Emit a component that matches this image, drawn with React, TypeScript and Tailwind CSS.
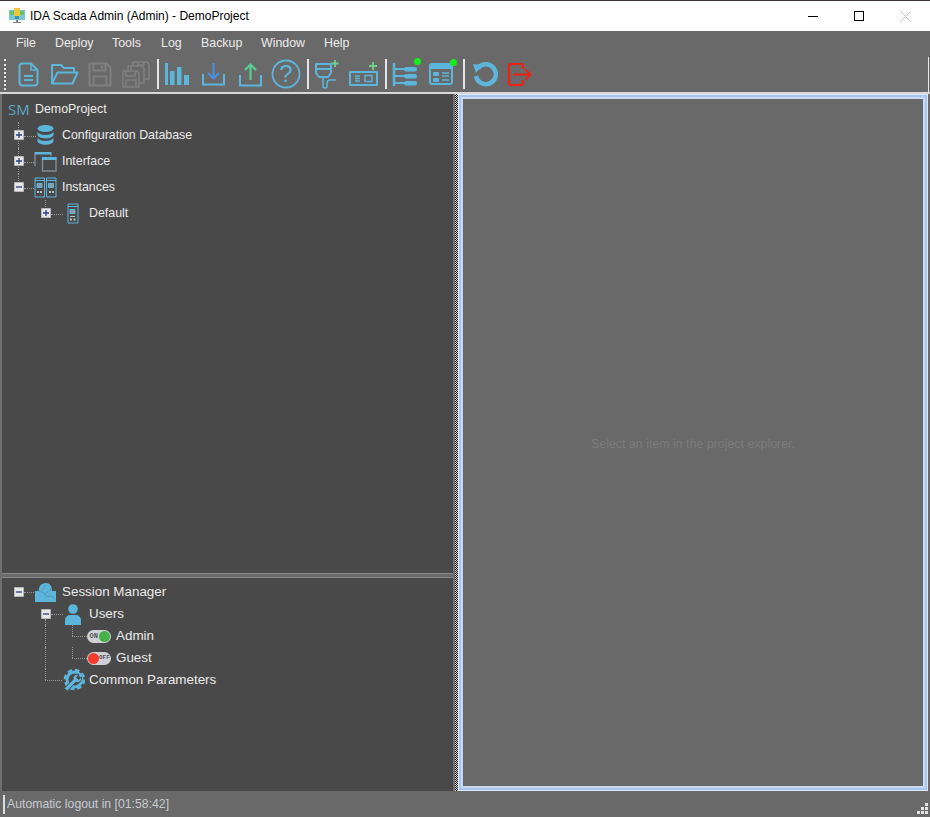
import React from 'react';

const BLUE = '#5cb5da';
const GREY = '#808080';

const menus = [
  { label: 'File', width: 'w-[39px]' },
  { label: 'Deploy', width: 'w-[57px]' },
  { label: 'Tools', width: 'w-[49px]' },
  { label: 'Log', width: 'w-[40px]' },
  { label: 'Backup', width: 'w-[60px]' },
  { label: 'Window', width: 'w-[63px]' },
  { label: 'Help', width: 'w-[40px]' },
];

function Icon({ w = 26, h = 26, children }: { w?: number; h?: number; children: React.ReactNode }) {
  return (
    <svg width={w} height={h} viewBox={`0 0 ${w} ${h}`} fill="none" className="block shrink-0">
      {children}
    </svg>
  );
}

const toolbarIcons = {
  file: (
    <Icon w={21} h={25}>
      <path d="M1.5 4a2.5 2.5 0 0 1 2.5-2.5h9l6.5 6.5v13a2.5 2.5 0 0 1-2.5 2.5H4A2.5 2.5 0 0 1 1.5 21z" stroke={BLUE} strokeWidth="2" />
      <path d="M13 2v6h6.5" stroke={BLUE} strokeWidth="1.6" />
      <path d="M6 14h9M6 18h9" stroke={BLUE} strokeWidth="1.8" />
    </Icon>
  ),
  open: (
    <Icon w={29} h={22}>
      <path d="M2 20V2h9l3 3h10v4" stroke={BLUE} strokeWidth="2" strokeLinejoin="round" />
      <path d="M2 20.5L7.5 9.5h20l-5 11z" stroke={BLUE} strokeWidth="2" strokeLinejoin="round" />
    </Icon>
  ),
  save: (
    <Icon w={24} h={25}>
      <g stroke={GREY} strokeWidth="2">
        <path d="M1.5 1.5h17l4 4v18h-21z" />
        <path d="M5.5 1.5v7h12v-7M5.5 23.5v-9h13v9" />
        <path d="M14 4v2.5" />
      </g>
    </Icon>
  ),
  saveAll: (
    <Icon w={28} h={27}>
      <g stroke={GREY} strokeWidth="1.5">
        <path d="M11 1h14l2 2v15H11z" />
        <path d="M6 5h14l2 2v15H6z" fill="#696969" />
        <path d="M1 10h14l2 2v14H1z" fill="#696969" />
        <path d="M4 10v5h9v-5M4 26v-7h10v7M9 5v4M16 1v3h6V1" />
      </g>
    </Icon>
  ),
  chart: (
    <Icon w={26} h={24}>
      <g fill={BLUE}>
        <rect x="1" y="1" width="3" height="22" />
        <rect x="6" y="9" width="4.5" height="14" />
        <rect x="13" y="5" width="4.5" height="18" />
        <rect x="20" y="13" width="5" height="10" />
      </g>
    </Icon>
  ),
  download: (
    <Icon w={23} h={24}>
      <path d="M1 12v10.500h21V12" stroke={BLUE} strokeWidth="2" />
      <path d="M11.5 1v15M6 11l5.5 5.5L17 11" stroke="#4a90d9" strokeWidth="2.2" />
    </Icon>
  ),
  upload: (
    <Icon w={23} h={25}>
      <path d="M1 13v10.500h21V13" stroke={BLUE} strokeWidth="2" />
      <path d="M11.5 18V3M6 8l5.500-5.500L17 8" stroke="#55cf94" strokeWidth="2.2" />
    </Icon>
  ),
  help: (
    <Icon w={30} h={30}>
      <circle cx="15" cy="15" r="13.5" stroke={BLUE} strokeWidth="1.8" />
      <text x="15" y="23" textAnchor="middle" fontSize="24" fontFamily="Liberation Sans" fill={BLUE}>?</text>
    </Icon>
  ),
  port: (
    <Icon w={27} h={31}>
      <path d="M2 5h15v9l-3 4H5l-3-4z" stroke={BLUE} strokeWidth="2" strokeLinejoin="round" />
      <path d="M2 10h15" stroke={BLUE} strokeWidth="2" />
      <path d="M9 18v9a2 2 0 0 0 4 0v-3a3 3 0 0 1 3-3h6" stroke={BLUE} strokeWidth="1.6" />
      <path d="M21 1v7M17.5 4.5h7" stroke="#6fd08c" strokeWidth="1.8" />
    </Icon>
  ),
  device: (
    <Icon w={29} h={24}>
      <path d="M1 10h27v13H1z" stroke={BLUE} strokeWidth="2" strokeLinejoin="round" />
      <path d="M6 14h5M6 16.500h5M6 19h5" stroke={BLUE} strokeWidth="1.3" />
      <path d="M16 13.500h7v6h-7z" stroke={BLUE} strokeWidth="1.4" />
      <path d="M24 0v8M20 4h8" stroke="#6fd08c" strokeWidth="1.8" />
    </Icon>
  ),
  tree: (
    <Icon w={25} h={25}>
      <path d="M2 1v23" stroke={BLUE} strokeWidth="2.5" />
      <path d="M2 7h12M2 14h12M2 21h12" stroke={BLUE} strokeWidth="2" />
      <rect x="12" y="5" width="13" height="4.5" rx="2" fill={BLUE} />
      <rect x="12" y="12" width="13" height="4.5" rx="2" fill={BLUE} />
      <rect x="12" y="19" width="13" height="4.5" rx="2" fill={BLUE} />
    </Icon>
  ),
  form: (
    <Icon w={24} h={22}>
      <rect x="1" y="1" width="22" height="20" rx="2" stroke={BLUE} strokeWidth="2" />
      <rect x="1" y="1" width="22" height="5" fill={BLUE} />
      <rect x="4" y="9" width="6" height="4" rx="1" fill={BLUE} />
      <rect x="4" y="15" width="6" height="4" rx="1" fill={BLUE} />
      <path d="M13 10h7M13 13h7M13 17h7" stroke={BLUE} strokeWidth="1.6" />
    </Icon>
  ),
  refresh: (
    <Icon w={26} h={26}>
      <path d="M6 7a10 10 0 1 1-2 8" stroke={BLUE} strokeWidth="4.5" />
      <path d="M1 3l10 1-7 8z" fill={BLUE} />
    </Icon>
  ),
  exit: (
    <Icon w={25} h={25}>
      <path d="M16 7V4a2 2 0 0 0-2-2H4a2 2 0 0 0-2 2v17a2 2 0 0 0 2 2h10a2 2 0 0 0 2-2v-3" stroke="#f02014" strokeWidth="2.2" />
      <path d="M6 12.500h17M18.500 7.500l5 5-5 5" stroke="#f02014" strokeWidth="1.8" />
    </Icon>
  ),
};

function GreenDot({ children }: { children: React.ReactNode }) {
  return (
    <div className="relative">
      {children}
      <span className="absolute -top-[4px] -right-[4px] h-[7px] w-[7px] rounded-full bg-[#13ee1c]" />
    </div>
  );
}

function Separator({ className }: { className: string }) {
  return <div className={`h-[30px] w-[2px] shrink-0 bg-[#e4e4e4] ${className}`} />;
}

function ToolButton({ children, width }: { children: React.ReactNode; width: string }) {
  return <div className={`flex shrink-0 items-center justify-center ${width}`}>{children}</div>;
}

function Expander({ open }: { open?: boolean }) {
  return (
    <svg width="10" height="10" viewBox="0 0 10 10" className="block">
      <rect x="0" y="0" width="10" height="10" fill="#e6e6e6" stroke="#8c8c8c" />
      <path d={open ? 'M2 5h6' : 'M2 5h6M5 2v6'} stroke="#2b3f86" strokeWidth="1.3" />
    </svg>
  );
}

const treeIcons = {
  database: (
    <Icon w={17} h={20}>
      <ellipse cx="8.5" cy="3.5" rx="8" ry="3.5" fill={BLUE} />
      <path d="M0.5 6.500c1 4.500 15 4.500 16 0v3.500c-1 4.500-15 4.500-16 0z" fill={BLUE} />
      <path d="M0.5 12.500c1 4.500 15 4.500 16 0v3.500c-1 5-15 5-16 0z" fill={BLUE} />
    </Icon>
  ),
  interface: (
    <Icon w={23} h={21}>
      <path d="M1 15V2h16v3" stroke="#7d8a94" strokeWidth="1.5" />
      <path d="M1 1h16v2.500H1z" fill={BLUE} />
      <path d="M8.5 7h13.500v13H8.500z" stroke="#7d8a94" strokeWidth="1.5" />
      <path d="M8 6h14.500v3H8z" fill={BLUE} />
    </Icon>
  ),
  instances: (
    <Icon w={23} h={21}>
      <g stroke={BLUE} strokeWidth="1">
        <path d="M1 1h9.500v19H1zM12.500 1H22v19h-9.500zM1 3.500h9.500M12.500 3.500H22" />
        <path d="M3 6.500h5v4H3zM14.500 6.500h5v4h-5z" fill="#8c9aa2" />
      </g>
      <path d="M3 14h2v2H3zM6 14h2v2H6zM15 14h2v2h-2zM18 14h2v2h-2z" fill="#b8c4c9" />
    </Icon>
  ),
  instance: (
    <Icon w={12} h={21}>
      <g stroke={BLUE} strokeWidth="1">
        <path d="M1 1h10v19H1zM1 3.500h10" />
        <path d="M3 6.500h5v4H3z" fill="#8c9aa2" />
      </g>
      <path d="M3 13h5v1H3zM3 15.500h2v2H3zM6.500 15.500h2v2h-2z" fill="#b8c4c9" />
    </Icon>
  ),
  session: (
    <Icon w={23} h={21}>
      <path d="M1 9h21v11H1z" fill={BLUE} />
      <path d="M5 10a7 7 0 0 1 7-9c4 0 6 3 6 9z" fill={BLUE} />
      <path d="M3 8l7 3 3 4 4-1 4 3M12 3L7 9M17 7l-7 6" stroke="#3f6f86" strokeWidth="0.8" strokeDasharray="1 1" />
    </Icon>
  ),
  user: (
    <Icon w={18} h={21}>
      <circle cx="9" cy="5" r="4.8" fill={BLUE} />
      <path d="M1 21v-5c0-3 3-5 5-5h6c2 0 5 2 5 5v5z" fill={BLUE} />
    </Icon>
  ),
  wrench: (
    <Icon w={23} h={23}>
      <circle cx="12.5" cy="10.500" r="7.5" stroke={BLUE} strokeWidth="3" />
      <circle cx="12.5" cy="10.500" r="9.5" stroke={BLUE} strokeWidth="2.5" strokeDasharray="4.5 3" />
      <path d="M2 19.500l9-9a4.500 4.500 0 0 1 6-5l-2.500 3 2 2 3-2.500a4.500 4.500 0 0 1-6 5.500l-8 8.500z" fill={BLUE} stroke="#494949" strokeWidth="1" />
    </Icon>
  ),
};

function Toggle({ on }: { on?: boolean }) {
  return (
    <span
      className={`flex h-[13px] w-[24px] items-center rounded-full bg-[#ced2d6] px-[1px] ${on ? 'justify-end' : 'justify-start'}`}
    >
      {on ? (
        <>
          <span className="mr-[1px] font-['Liberation_Mono',monospace] text-[7px] font-bold leading-none text-[#555555]">ON</span>
          <span className="h-[11px] w-[11px] rounded-full bg-[#46b049]" />
        </>
      ) : (
        <>
          <span className="h-[11px] w-[11px] rounded-full bg-[#f23a2e]" />
          <span className="font-['Liberation_Mono',monospace] text-[6px] font-bold leading-none text-[#555555]">OFF</span>
        </>
      )}
    </span>
  );
}

interface TreeRowProps {
  height: string;
  indent: string;
  expander?: 'open' | 'closed';
  iconBox: string;
  icon: React.ReactNode;
  label: string;
  children?: React.ReactNode;
}

function TreeRow({ height, indent, expander, iconBox, icon, label, children }: TreeRowProps) {
  return (
    <div className={`relative flex items-center ${height} ${indent}`}>
      {children}
      <div className="relative z-10 flex w-[10px] shrink-0 items-center justify-center">
        {expander && <Expander open={expander === 'open'} />}
      </div>
      <div className={`relative z-10 flex shrink-0 items-center ${iconBox}`}>{icon}</div>
      <span className="whitespace-nowrap text-[#ebebeb]">{label}</span>
    </div>
  );
}

// tree connector pieces, drawn over the row they belong to
function DotsH({ className }: { className: string }) {
  return <span className={`absolute h-0 border-t border-dotted border-[#999999] ${className}`} />;
}

function DotsV({ className }: { className: string }) {
  return <span className={`absolute w-0 border-l border-dotted border-[#999999] ${className}`} />;
}

export default function App() {
  return (
    <div className="flex h-[817px] w-[930px] flex-col overflow-hidden bg-[#696969] font-['Liberation_Sans',Arial,sans-serif] text-[12.4px]">
      <div className="flex h-[31px] shrink-0 items-center border-t border-[#3a3230] bg-white">
        <div className="ml-[9px] mr-[5px]">
          <svg width="16" height="16" viewBox="0 0 16 16" className="block">
            <rect x="0" y="2" width="16" height="10" fill="#79c8d6" />
            <rect x="5" y="0" width="6" height="8" fill="#e9c93e" />
            <rect x="1" y="3" width="4" height="4" fill="#69bf6a" />
            <rect x="11" y="3" width="4" height="4" fill="#69bf6a" />
            <rect x="6" y="8" width="4" height="3" fill="#3f8fa8" />
            <path d="M7 12h2v2h3v1H4v-1h3z" fill="#7a8790" />
          </svg>
        </div>
        <span className="text-[12px] text-black">IDA Scada Admin (Admin) - DemoProject</span>
        <div className="ml-auto flex items-center">
          <div className="flex w-[46px] justify-center">
            <span className="h-px w-[10px] bg-black" />
          </div>
          <div className="flex w-[46px] justify-center">
            <span className="h-[10px] w-[10px] border border-black" />
          </div>
          <div className="flex w-[46px] justify-center">
            <svg width="11" height="11" viewBox="0 0 11 11" className="block">
              <path d="M0.5 0.5l10 10M10.5 0.5l-10 10" stroke="#c4c4c4" />
            </svg>
          </div>
          <div className="w-[2px]" />
        </div>
      </div>

      <div className="flex h-[22px] shrink-0 items-center pl-[6px] pt-[2px] text-[#ebebeb]">
        {menus.map((m) => (
          <span key={m.label} className={`${m.width} shrink-0 pl-[10px]`}>
            {m.label}
          </span>
        ))}
      </div>

      <div className="flex h-[41px] shrink-0 items-center border-b-2 border-[#d8d8d8] pl-[4px] pr-[1px] pt-[3px]">
        <div className="mr-[4px] h-[31px] w-[2px] border-l-2 border-dotted border-[#e8e8e8]" />
        <ToolButton width="w-[36px]">{toolbarIcons.file}</ToolButton>
        <ToolButton width="w-[36px]">{toolbarIcons.open}</ToolButton>
        <ToolButton width="w-[36px]">{toolbarIcons.save}</ToolButton>
        <ToolButton width="w-[36px]">{toolbarIcons.saveAll}</ToolButton>
        <Separator className="ml-[3px]" />
        <ToolButton width="w-[36px]">{toolbarIcons.chart}</ToolButton>
        <ToolButton width="w-[37px]">{toolbarIcons.download}</ToolButton>
        <ToolButton width="w-[36px]">{toolbarIcons.upload}</ToolButton>
        <ToolButton width="w-[36px]">{toolbarIcons.help}</ToolButton>
        <Separator className="ml-[3px]" />
        <ToolButton width="w-[36px]">{toolbarIcons.port}</ToolButton>
        <ToolButton width="w-[37px]">{toolbarIcons.device}</ToolButton>
        <Separator className="ml-[3px]" />
        <ToolButton width="w-[34px]">
          <GreenDot>{toolbarIcons.tree}</GreenDot>
        </ToolButton>
        <ToolButton width="w-[40px]">
          <GreenDot>{toolbarIcons.form}</GreenDot>
        </ToolButton>
        <Separator className="ml-[2px]" />
        <ToolButton width="w-[40px]">{toolbarIcons.refresh}</ToolButton>
        <ToolButton width="w-[28px]">{toolbarIcons.exit}</ToolButton>
        <div className="ml-auto h-[35px] w-px self-end bg-[#e8e8e8]" />
      </div>

      <div className="flex min-h-0 flex-1">
        <div className="flex w-[455px] shrink-0 flex-col border-l-2 border-r-2 border-[#6f6f6f] bg-[#494949]">
          <div className="h-[479px] shrink-0 pt-[2px]">
            <div className="flex h-[26px] items-center pl-[6px] text-[#ebebeb]">
              <span className="w-[27px] font-['Open_Sans',sans-serif] text-[15px] text-[#5ba7c6]">SM</span>
              <span>DemoProject</span>
            </div>
            <TreeRow height="h-[26px]" indent="pl-[12px]" expander="closed" iconBox="w-[38px] pl-[13px]" icon={treeIcons.database} label="Configuration Database">
              <DotsV className="left-[16px] top-0 h-[26px]" />
              <DotsH className="left-[22px] top-[14px] w-[12px]" />
            </TreeRow>
            <TreeRow height="h-[26px]" indent="pl-[12px]" expander="closed" iconBox="w-[38px] pl-[10px]" icon={treeIcons.interface} label="Interface">
              <DotsV className="left-[16px] top-0 h-[26px]" />
              <DotsH className="left-[22px] top-[14px] w-[10px]" />
            </TreeRow>
            <TreeRow height="h-[26px]" indent="pl-[12px]" expander="open" iconBox="w-[38px] pl-[10px]" icon={treeIcons.instances} label="Instances">
              <DotsV className="left-[16px] top-0 h-[13px]" />
              <DotsH className="left-[22px] top-[14px] w-[10px]" />
            </TreeRow>
            <TreeRow height="h-[26px]" indent="pl-[39px]" expander="closed" iconBox="w-[38px] pl-[16px]" icon={treeIcons.instance} label="Default">
              <DotsV className="left-[43px] top-0 h-[13px]" />
              <DotsH className="left-[49px] top-[14px] w-[12px]" />
            </TreeRow>
          </div>
          <div className="h-[5px] shrink-0 border-y border-[#8a8a8a] bg-[#696969]" />
          <div className="min-h-0 flex-1 pt-[3px] text-[13.4px]">
            <TreeRow height="h-[22px]" indent="pl-[12px]" expander="open" iconBox="w-[38px] pl-[10px]" icon={treeIcons.session} label="Session Manager">
              <DotsH className="left-[22px] top-[11px] w-[12px]" />
            </TreeRow>
            <TreeRow height="h-[22px]" indent="pl-[39px]" expander="open" iconBox="w-[38px] pl-[13px]" icon={treeIcons.user} label="Users">
              <DotsH className="left-[49px] top-[11px] w-[12px]" />
              <DotsV className="left-[43px] top-[16px] h-[6px]" />
            </TreeRow>
            <TreeRow height="h-[22px]" indent="pl-[39px]" iconBox="w-[65px] pl-[36px]" icon={<Toggle on />} label="Admin">
              <DotsV className="left-[43px] top-0 h-[22px]" />
              <DotsV className="left-[70px] top-0 h-[11px]" />
              <DotsH className="left-[70px] top-[11px] w-[15px]" />
            </TreeRow>
            <TreeRow height="h-[22px]" indent="pl-[39px]" iconBox="w-[65px] pl-[36px]" icon={<Toggle />} label="Guest">
              <DotsV className="left-[43px] top-0 h-[22px]" />
              <DotsV className="left-[70px] top-0 h-[11px]" />
              <DotsH className="left-[70px] top-[11px] w-[15px]" />
            </TreeRow>
            <TreeRow height="h-[22px]" indent="pl-[39px]" iconBox="w-[38px] pl-[11px]" icon={treeIcons.wrench} label="Common Parameters">
              <DotsV className="left-[43px] top-0 h-[11px]" />
              <DotsH className="left-[43px] top-[11px] w-[17px]" />
            </TreeRow>
          </div>
        </div>

        <div className="w-[3px] shrink-0 bg-[repeating-conic-gradient(#1c1c1c_0_25%,#d0d0d0_0_50%)] bg-[length:2px_2px]" />

        <div className="mr-[2px] flex flex-1 border border-[#dce8f8]">
          <div className="flex flex-1 border-2 border-[#a8c7f0]">
            <div className="flex flex-1 items-center justify-center border-2 border-[#c9dbf4] bg-[#696969] pt-[3px]">
              <span className="text-[#7c7c7c]">Select an item in the project explorer.</span>
            </div>
          </div>
        </div>
      </div>

      <div className="flex h-[26px] shrink-0 items-center pl-[3px] pt-[1px] text-[12.25px]">
        <span className="mr-[2px] h-[19px] w-[2px] bg-[#dcdcdc]" />
        <span className="text-[#c6cbd1]">Automatic logout in [01:58:42]</span>
        <svg width="11" height="11" viewBox="0 0 11 11" className="ml-auto mr-[2px] mt-[8px] block">
          <path d="M8 0h3v3H8zM4 4h3v3H4zM8 4h3v3H8zM0 8h3v3H0zM4 8h3v3H4zM8 8h3v3H8z" fill="#e2e2e2" />
        </svg>
      </div>
    </div>
  );
}
